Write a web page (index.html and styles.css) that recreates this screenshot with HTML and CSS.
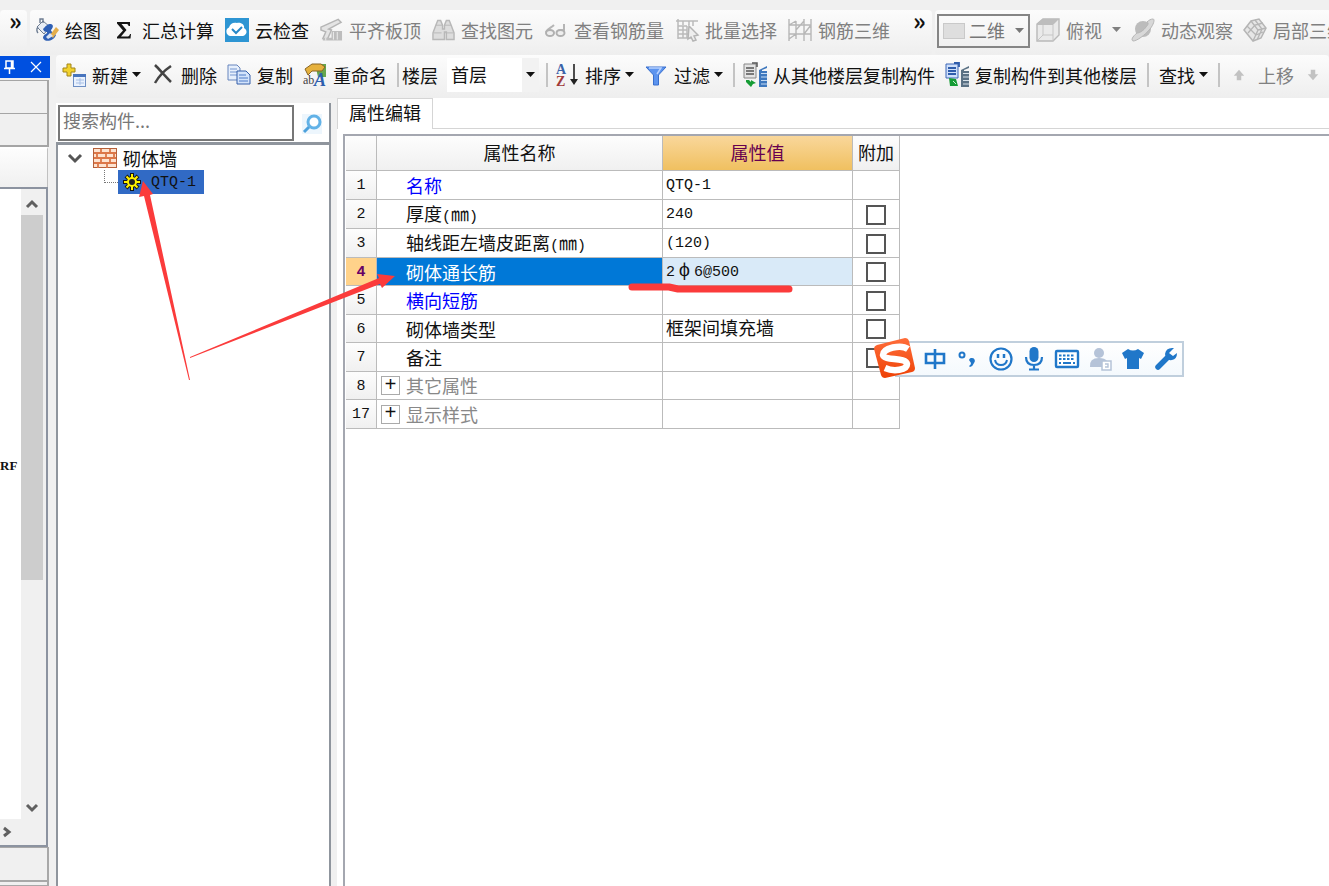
FILE: index.html
```html
<!DOCTYPE html>
<html lang="zh-CN">
<head>
<meta charset="utf-8">
<title>属性编辑</title>
<link rel="stylesheet" href="styles.css">
</head>
<body>
<header class="ribbon">
  <div class="bar bar-stub"><span class="more">»</span></div>
  <div class="bar bar-main">
    <button class="tool"><svg class="i24" viewBox="0 0 24 24"><path d="M2 9l6-6 7 6-6 7z" fill="#e9eef5" stroke="#6d7c91"/><path d="M3 9c-2 2-1 5 0 6M5 5V1h3v4" fill="none" stroke="#6d7c91" stroke-width="1.4"/><path d="M8 11c3-3 4-5 8-5 3 1 2 4 0 6 0 2 3 3 5 5-2 6-11 8-13 3 0-4 5-4 4-6-1 0-3 0-4-3z" fill="#2f60b5"/><path d="M15 17l6-8 3 3-6 8z" fill="#e3ad4b"/><path d="M11 19l4-4 3 3-5 3z" fill="#d7e2f4"/></svg>绘图</button>
    <button class="tool"><svg class="i24" viewBox="0 0 24 24"><path d="M5 4h13v4h-1.5c0-1.500-1-2-2.500-2H9.500l5 6-5.500 6.500h6c1.500 0 2.500-.5 3-2.500H19l-.5 4.500H5v-1.500l6-6.500-6-7z" fill="#151515"/></svg>汇总计算</button>
    <button class="tool"><svg class="i24" viewBox="0 0 24 24"><rect width="24" height="24" fill="#2d95d3"/><path d="M5 18a4.500 4.500 0 0 1-1-8.500C5 6 8 4 12 5c4-1 8 2 7 5 4 2 3 7-1 8z" fill="#fff"/><path d="M7 11l4 4 6-6" fill="none" stroke="#2788c8" stroke-width="2"/></svg>云检查</button>
    <button class="tool off"><svg class="i23" viewBox="0 0 24 24"><path d="M1 9L19 1l3 3-13 7 3 1-4 9H3l3-7-5-2z" fill="#e4e4e4" stroke="#b5b5b5" stroke-width="1.500"/><path d="M12 13h11v10H3v-3h9z" fill="#bdbdbd"/><path d="M14 14v8M18 14v8M6 20v3" stroke="#eee"/></svg>平齐板顶</button>
    <button class="tool off"><svg class="i23" viewBox="0 0 24 24"><path d="M4 7l2-5h3l2 5v4h2V7l2-5h3l2 5 3 8v7h-8v-8h-2v8H1v-7z" fill="#ddd" stroke="#b8b8b8" stroke-width="1.500"/><path d="M2 15h8M14 15h8M4 7h7M13 7h7" stroke="#b8b8b8"/></svg>查找图元</button>
    <button class="tool off"><svg class="i24" viewBox="0 0 24 24"><path d="M2 14c2-4 5-4 8-7M13 14c1-3 5-1 7-2V6" fill="none" stroke="#b5b5b5" stroke-width="2"/><ellipse cx="6" cy="15" rx="4" ry="3" fill="#eee" stroke="#b0b0b0" stroke-width="2"/><ellipse cx="16.500" cy="15" rx="4" ry="3" fill="#eee" stroke="#b0b0b0" stroke-width="2"/></svg>查看钢筋量</button>
    <button class="tool off"><svg class="i24" viewBox="0 0 24 24"><path d="M1 3h22M3 1v20M8 3v4M14 3v4M3 8h9M3 12h9M3 16h11M3 20h14M8 8v12M12 8v12M18 3v5" stroke="#bababa" stroke-width="1.500"/><path d="M14 8l9 9-4 1 2 4-3 1-2-4-3 2z" fill="#eee" stroke="#b5b5b5" stroke-width="1.500"/></svg>批量选择</button>
    <button class="tool off"><svg class="i24" viewBox="0 0 24 24"><path d="M1 1v22M8 3v18M16 1v22M23 1v22M1 7h22M1 16h22M1 7l7-4M1 21l7-5M8 12l8-9M16 16l7-9" fill="none" stroke="#b7b7b7" stroke-width="1.400"/></svg>钢筋三维</button>
    <span class="more more-end">»</span>
  </div>
  <div class="bar bar-view">
    <div class="view-mode">
      <svg class="view-icon" viewBox="0 0 22 16"><rect x=".5" y=".5" width="21" height="15" fill="#dedede" stroke="#c9c9c9"/></svg>
      <select class="view-select" aria-label="视图"><option>二维</option></select>
      <i class="caret"></i>
    </div>
    <button class="tool off"><svg class="i24" viewBox="0 0 24 24"><path d="M1 6l6-5h16v16l-6 6H1z" fill="#eaeaea" stroke="#b9b9b9" stroke-width="1.400"/><path d="M1 6l6-5h16l-6 6H1z" fill="#bdbdbd"/><path d="M17 7v16M7 7v10h10M7 17l-5 5" fill="none" stroke="#c6c6c6"/></svg>俯视<i class="caret gap-caret"></i></button>
    <button class="tool off"><svg class="i24" viewBox="0 0 24 24"><circle cx="12" cy="11" r="8" fill="#bcbcbc"/><path d="M6 15C1 19 0 22 2 23c4 0 12-6 17-12 4-5 5-10 3-10-2 0-4 1-6 3 2 1 1 3-1 5-2 3-6 6-9 6z" fill="#d8d8d8" stroke="#b5b5b5"/></svg>动态观察</button>
    <button class="tool off"><svg class="i24" viewBox="0 0 24 24"><path d="M1 12l7-9 8-2 7 9-5 10-8 3z" fill="#e6e6e6" stroke="#b5b5b5" stroke-width="1.500"/><path d="M8 3l7 9-5 11M15 12l8-2M4 8l9 9 7-3M12 2l7 9-5 11M5 15l7-8 8-2" fill="none" stroke="#b5b5b5" stroke-width="1.300"/></svg>局部三维</button>
  </div>
</header>

<div class="workspace">
  <aside class="dock">
    <div class="dock-title">
      <button class="dock-btn" aria-label="固定"><svg class="i16" viewBox="0 0 16 16"><path d="M5 2h7v7H5zM3 9.500h11M8.500 9v6M10.500 2v7" fill="none" stroke="#fff" stroke-width="1.500"/></svg></button>
      <button class="dock-btn" aria-label="关闭"><svg class="i16" viewBox="0 0 16 16"><path d="M3 3l10 10M13 3L3 13" stroke="#fff" stroke-width="1.200"/></svg></button>
    </div>
    <div class="dock-row"></div>
    <div class="dock-row dock-row-last"></div>
    <div class="dock-tools"></div>
    <div class="dock-list">
      <div class="dock-text">RF</div>
      <div class="scroll">
        <svg class="scroll-arrow" viewBox="0 0 22 26"><path d="M6 18l5-5 5 5" fill="none" stroke="#606060" stroke-width="3"/></svg>
        <div class="scroll-thumb"></div>
        <svg class="scroll-arrow scroll-down" viewBox="0 0 22 26"><path d="M6 12l5 5 5-5" fill="none" stroke="#606060" stroke-width="3"/></svg>
      </div>
      <div class="scroll-h"><svg class="i16" viewBox="0 0 16 16"><path d="M4 4l5 4-5 4" fill="none" stroke="#606060" stroke-width="3"/></svg></div>
    </div>
    <div class="dock-foot"></div>
    <div class="dock-foot dock-foot-end"></div>
  </aside>

  <main class="main">
    <div class="actions">
      <button class="tool"><svg class="i24" viewBox="0 0 24 24"><path d="M5 1h4v4h4v4H9v4H5V9H1V5h4z" fill="#f2d22e" stroke="#a38619"/><rect x="11.500" y="11.500" width="12" height="12" fill="#e9f1fd" stroke="#6e8fc4"/><path d="M11 11h13v3H11z" fill="#4774bd"/><path d="M14 17h8M14 20h8M18 15v7" stroke="#a7bfe5"/></svg>新建<i class="caret"></i></button>
      <button class="tool"><svg class="i24" viewBox="0 0 24 24"><path d="M4 2c4 4 11 12 16 17M20 3C14 7 8 13 4 20" fill="none" stroke="#444" stroke-width="2.500"/></svg>删除</button>
      <button class="tool"><svg class="i24" viewBox="0 0 24 24"><path d="M1 2h9l3 3v12H1z" fill="#e6effc" stroke="#6785bd"/><path d="M3 6h7M3 9h7M3 12h7" stroke="#7596d0"/><path d="M10 8h9l4 4v9H10z" fill="#d3e3fb" stroke="#355fa9"/><path d="M12 12h7M12 15h9M12 18h9" stroke="#4c7ac6"/></svg>复制</button>
      <button class="tool"><svg class="i24" viewBox="0 0 24 24"><path d="M12 1h11v13h-8z" fill="#67a64e"/><path d="M2 6l7-5h9l4 3-3 4H9l-4 4z" fill="#e6b13d" stroke="#896523"/><text class="icon-ab" x="0" y="21">ab</text><text class="icon-a" x="11" y="23">A</text></svg>重命名</button>
      <span class="sep"></span>
      <label class="floor-label" for="floor">楼层</label>
      <div class="floor"><select id="floor" class="floor-select"><option>首层</option></select><i class="caret"></i></div>
      <span class="sep sep-floor"></span>
      <button class="tool"><svg class="i24" viewBox="0 0 24 24"><text class="icon-sort icon-sort-a" x="1" y="11">A</text><text class="icon-sort icon-sort-z" x="1" y="23">Z</text><path d="M19 1v18" stroke="#222" stroke-width="1.600"/><path d="M15 16h8l-4 6z" fill="#222"/></svg>排序<i class="caret"></i></button>
      <button class="tool"><svg class="i24" viewBox="0 0 24 24"><path d="M2 4h20l-7.500 8v10h-5V12z" fill="#5c94ef" stroke="#386fce"/><path d="M5 5h12l-4 6" fill="none" stroke="#b6d1ff" stroke-width="1.500"/></svg>过滤<i class="caret"></i></button>
      <span class="sep"></span>
      <button class="tool"><svg class="i24" viewBox="0 0 24 24"><path d="M1 1h12v14H1z" fill="#e4e4e4" stroke="#888"/><path d="M9 0h5v4M3 5h8M3 8h8M3 11h8" fill="none" stroke="#555" stroke-width="1.500"/><path d="M3 17h3l2 2v-2l5 3-3 1-2 3-5-5z" fill="#169c35"/><path d="M16 7l8-4v2l-5 2v1h5v16h-8z" fill="#3e78be"/><path d="M18 10.500h6M18 14h6M18 17.500h6M18 21h6" stroke="#c7dcf4"/></svg>从其他楼层复制构件</button>
      <button class="tool"><svg class="i24" viewBox="0 0 24 24"><path d="M1 1h12v14H1z" fill="#cfe0fa" stroke="#3c66b7"/><path d="M9 0h5v4M3 5h8M3 8h8M3 11h8" fill="none" stroke="#2f5dac" stroke-width="1.800"/><path d="M4 15l7 1 2 7H5z" fill="#169c35"/><path d="M8 18l3 3" stroke="#c9f0d0"/><path d="M16 7l8-4v2l-5 2v1h5v16h-8z" fill="#5a7184"/><path d="M18 10.500h6M18 14h6M18 17.500h6M18 21h6" stroke="#d8e2e9"/></svg>复制构件到其他楼层</button>
      <span class="sep sep-wide"></span>
      <button class="tool">查找<i class="caret"></i></button>
      <span class="sep sep-wide"></span>
      <button class="tool off move"><svg class="i18" viewBox="0 0 18 24"><path d="M9 5l7 8h-4v6H6v-6H2z" fill="#c2c2c2"/></svg>上移</button>
      <button class="tool off" aria-label="下移"><svg class="i18" viewBox="0 0 18 24"><path d="M9 19l7-8h-4V5H6v6H2z" fill="#c2c2c2"/></svg></button>
    </div>

    <div class="panes">
      <section class="tree-pane">
        <div class="search">
          <input class="search-input" type="text" placeholder="搜索构件..." aria-label="搜索构件">
          <button class="search-btn" aria-label="搜索"><svg class="i20" viewBox="0 0 20 20"><rect width="20" height="20" fill="#edf6fd"/><circle cx="12" cy="8" r="6" fill="#fff" stroke="#62b2e7" stroke-width="3"/><path d="M7 13l-5 5" stroke="#4da1dc" stroke-width="3"/></svg></button>
        </div>
        <div class="tree">
          <div class="tree-root">
            <svg class="i18 chev" viewBox="0 0 18 18"><path d="M3 6l6 6 6-6" fill="none" stroke="#555" stroke-width="3"/></svg>
            <svg class="brick" viewBox="0 0 24 20"><rect x=".5" y=".5" width="23" height="19" fill="#fde3d0" stroke="#b5603a"/><path d="M1 5h22M1 10h22M1 15h22M8 1v4M17 1v4M4 5v5M13 5v5M21 5v5M8 10v5M17 10v5M5 15v5M14 15v5" stroke="#dc7748" stroke-width="1.800"/></svg>
            <span>砌体墙</span>
          </div>
          <div class="tree-leaf">
            <span class="elbow"></span>
            <span class="leaf"><svg class="i18" viewBox="0 0 18 18"><path d="M9 0v18M0 9h18M3 3l12 12M15 3L3 15" stroke="#151515" stroke-width="4"/><path d="M9 1v16M1 9h16M3.500 3.500l11 11M14.500 3.500l-11 11" stroke="#fff200" stroke-width="2"/><circle cx="9" cy="9" r="4" fill="#222" stroke="#fff200" stroke-width="2"/></svg>QTQ-1</span>
          </div>
        </div>
      </section>

      <section class="editor">
        <div class="tabs"><button class="tab">属性编辑</button><div class="tab-rest"></div></div>
        <div class="grid-frame">
          <table class="grid">
            <thead><tr><th class="c-no"></th><th class="c-name">属性名称</th><th class="c-val picked">属性值</th><th class="c-add">附加</th></tr></thead>
            <tbody>
              <tr><th>1</th><td class="name link">名称</td><td>QTQ-1</td><td></td></tr>
              <tr><th>2</th><td class="name">厚度<span class="half">(</span>㎜<span class="half">)</span></td><td>240</td><td class="mark"><input type="checkbox" aria-label="厚度 附加"></td></tr>
              <tr><th>3</th><td class="name">轴线距左墙皮距离<span class="half">(</span>㎜<span class="half">)</span></td><td>(120)</td><td class="mark"><input type="checkbox" aria-label="轴线距左墙皮距离 附加"></td></tr>
              <tr class="current"><th>4</th><td class="name">砌体通长筋</td><td class="value">2<span class="rebar">ф</span>6@500</td><td class="mark"><input type="checkbox" aria-label="砌体通长筋 附加"></td></tr>
              <tr><th>5</th><td class="name link">横向短筋</td><td></td><td class="mark"><input type="checkbox" aria-label="横向短筋 附加"></td></tr>
              <tr><th>6</th><td class="name">砌体墙类型</td><td>框架间填充墙</td><td class="mark"><input type="checkbox" aria-label="砌体墙类型 附加"></td></tr>
              <tr><th>7</th><td class="name">备注</td><td></td><td class="mark"><input type="checkbox" aria-label="备注 附加"></td></tr>
              <tr><th>8</th><td class="group"><div class="group-in"><button class="plus">+</button><span>其它属性</span></div></td><td></td><td></td></tr>
              <tr><th>17</th><td class="group"><div class="group-in"><button class="plus">+</button><span>显示样式</span></div></td><td></td><td></td></tr>
            </tbody>
          </table>
        </div>
      </section>
    </div>
  </main>
</div>

<svg class="ink" viewBox="0 0 700 300" aria-hidden="true">
  <path d="M143 35l10 13-3 1 40 185h-1L144 50l-5 1z" fill="#fb3b3b"/>
  <path d="M190 212v-1L379 132l-2-4 18 2-13 12-2-4z" fill="#fb3b3b"/>
</svg>
<svg class="ink-line" viewBox="0 0 170 14" aria-hidden="true"><path d="M5 5h37l9 2h111" fill="none" stroke="#fb3b3b" stroke-width="7" stroke-linecap="round" stroke-linejoin="round"/></svg>

<div class="ime">
  <svg class="ime-logo" viewBox="0 0 44 44"><defs><linearGradient id="lg" x1="0" y1="0" x2="0" y2="1"><stop offset="0" stop-color="#ff6d3a"/><stop offset="1" stop-color="#ee4206"/></linearGradient></defs><path d="M4 9L32 2q3 0 4 3l6 27q0 3-3 4l-27 6q-3 0-4-3L1 13q0-3 3-4z" fill="url(#lg)"/><path d="M35 13C28 8 10 12 10 19c1 6 23 2 24 9 0 6-13 8-22 4" fill="none" stroke="#fff" stroke-width="6.500"/></svg>
  <svg class="i24" viewBox="0 0 24 24"><path d="M3 7h18v9H3zM12 2v20" fill="none" stroke="#2077c9" stroke-width="2.600"/></svg>
  <svg class="i24" viewBox="0 0 24 24"><circle cx="6" cy="8" r="2.500" fill="none" stroke="#2077c9" stroke-width="2"/><path d="M13 13a3 3 0 1 1 5 3q-1 3-4 4l-1-1q2-1 2-3z" fill="#2077c9"/></svg>
  <svg class="i24" viewBox="0 0 24 24"><circle cx="12" cy="12" r="10.500" fill="none" stroke="#2077c9" stroke-width="2.200"/><path d="M9 7v4M15 7v4" stroke="#2077c9" stroke-width="2.500"/><path d="M6 13q1 5 6 5t6-5" fill="none" stroke="#2077c9" stroke-width="2"/></svg>
  <svg class="i24" viewBox="0 0 24 24"><rect x="7.500" y="0" width="9" height="15" rx="4.500" fill="#2077c9"/><path d="M4 10q0 8 8 8t8-8M12 18v4M7 22.500h10" fill="none" stroke="#2077c9" stroke-width="2.200"/></svg>
  <svg class="i24" viewBox="0 0 24 24"><rect x="1" y="4" width="22" height="16" rx="1" fill="#fff" stroke="#2077c9" stroke-width="2.400"/><path d="M4 8.500h16M4 12h16" stroke="#2077c9" stroke-width="2" stroke-dasharray="2.500 1.500"/><path d="M4 16h2M8 16h8M18 16h2" stroke="#2077c9" stroke-width="2"/></svg>
  <svg class="i24" viewBox="0 0 24 24"><circle cx="11" cy="6" r="5" fill="#b5c3d8"/><path d="M2 20q-1-9 9-9 6 0 8 3v6z" fill="#b5c3d8"/><rect x="14" y="14" width="9" height="9" fill="#fff" stroke="#b5c3d8" stroke-width="1.500"/><path d="M17 17h3v3h-3" fill="none" stroke="#b5c3d8" stroke-width="1.400"/></svg>
  <svg class="i24" viewBox="0 0 24 24"><path d="M7 2q5 3 10 0l6 4-3 6-2-1v11H6V11l-2 1-3-6z" fill="#2077c9"/></svg>
  <svg class="i24" viewBox="0 0 24 24"><path d="M4 20L14 10" stroke="#2077c9" stroke-width="5.500" stroke-linecap="round"/><path d="M20 1q-8-1-9 6 1 7 7 6 5-1 5-7l-4 3-4-3z" fill="#2077c9"/></svg>
</div>
</body>
</html>
```
FILE: styles.css
```css
* { box-sizing: border-box; }

body {
  margin: 0;
  height: 100vh;
  display: flex;
  flex-direction: column;
  overflow: hidden;
  background: #f0f0f0;
  color: #111;
  font: 18px/24px "Noto Sans CJK SC", sans-serif;
}

button, select, input { font: inherit; color: inherit; margin: 0; }
button { background: none; border: 0; padding: 0; }
svg { display: block; flex: none; overflow: visible; }

.i16 { width: 16px; height: 16px; }
.i18 { width: 18px; height: 18px; }
.i20 { width: 20px; height: 20px; }
.i23 { width: 23px; height: 24px; }
.i24 { width: 24px; height: 24px; }

.caret {
  flex: none;
  width: 9px;
  height: 5px;
  background: currentColor;
  clip-path: polygon(0 0, 100% 0, 50% 100%);
}

/* upper toolbar */
.ribbon {
  display: flex;
  flex: none;
  gap: 3px;
  padding-top: 10px;
  height: 55px;
}
.bar {
  display: flex;
  flex: none;
  align-items: center;
  background: linear-gradient(#fcfcfc, #eeeeee);
  border-radius: 4px;
  padding-bottom: 6px;
}
.bar-stub { width: 27px; padding-left: 9px; }
.bar-main { width: 902px; gap: 11px; padding-left: 5px; }
.bar-view { flex: 1 0 auto; gap: 10px; padding-left: 2px; }
.more { font-size: 24px; font-weight: 700; line-height: 20px; align-self: flex-start; }
.more-end { margin-left: 12px; }

.tool {
  display: flex;
  flex: none;
  align-items: center;
  gap: 6px;
  white-space: nowrap;
}
.tool .caret { margin-left: -2px; }
.tool .gap-caret { margin-left: 4px; }
.off { color: #808080; }

.view-mode {
  position: relative;
  display: flex;
  align-items: center;
  width: 93px;
  height: 34px;
  margin-top: 2px;
  margin-right: -4px;
  padding-left: 4px;
  border: 2px solid #858585;
  color: #777;
}
.view-icon { width: 22px; height: 16px; }
.view-select {
  width: 62px;
  padding: 0 0 2px 4px;
  border: 0;
  background: none;
  appearance: none;
}
.view-mode .caret, .floor .caret { position: absolute; right: 4px; pointer-events: none; }

.workspace { display: flex; flex: 1; min-height: 0; }

/* left dock */
.dock { display: flex; flex-direction: column; flex: none; width: 50px; padding-top: 1px; }
.dock-title {
  display: flex;
  align-items: center;
  gap: 11px;
  height: 22px;
  margin-bottom: 2px;
  padding-left: 1px;
  background: #0050e0;
}
.dock-row {
  height: 33px;
  margin-right: 1px;
  border-top: 1px solid #a5a5a5;
  border-right: 2px solid #a5a5a5;
}
.dock-row-last { height: 34px; border-bottom: 2px solid #a5a5a5; }
.dock-tools {
  height: 40px;
  margin-right: 2px;
  border-right: 1px solid #c0c0c0;
  border-top: 2px solid #fff;
  background: linear-gradient(#fdfdfd, #f0f0f0);
}
.dock-list {
  flex: 1;
  min-height: 0;
  display: grid;
  grid-template-columns: 21px 1fr;
  grid-template-rows: 1fr 26px;
  margin-right: 2px;
  padding-right: 3px;
  border: solid #8c93a0;
  border-width: 2px 2px 2px 0;
  background: #f0f0f0;
}
.dock-text {
  padding-top: 265px;
  background: #fff;
  font: 700 13px/24px "Liberation Serif", serif;
}
.scroll { display: flex; flex-direction: column; }
.scroll-arrow { width: 22px; height: 26px; }
.scroll-thumb { height: 58%; background: #cdcdcd; }
.scroll-down { margin-top: auto; }
.scroll-h { display: flex; align-items: center; }
.dock-foot {
  flex: none;
  height: 34px;
  margin-right: 1px;
  border: solid #a8a8a8;
  border-width: 1px 2px 1px 0;
}
.dock-foot-end { height: 5px; }

/* second toolbar */
.main { display: flex; flex-direction: column; flex: 1; min-width: 0; padding-left: 6px; }
.actions {
  display: flex;
  flex: none;
  align-items: center;
  gap: 10px;
  height: 43px;
  padding: 0 0 4px 6px;
  border-radius: 4px;
  background: linear-gradient(#fcfcfc, #eeeeee);
}
.sep { flex: none; width: 2px; height: 24px; background: #c4c4c4; margin-right: -2px; }
.sep-wide { margin-right: 0; }
.floor-label { flex: none; margin-left: -5px; }
.floor {
  position: relative;
  display: flex;
  align-items: center;
  flex: none;
  width: 92px;
  height: 34px;
  margin-left: -1px;
  background: linear-gradient(to right, #fff 75px, #f2f2f2 75px);
}
.floor-select { width: 92px; padding: 0 0 2px 4px; border: 0; background: none; appearance: none; }
.sep-floor { margin-left: -3px; margin-right: -3px; }
.move { gap: 10px; }

.icon-ab { font: 12px "Liberation Serif", serif; fill: #444; }
.icon-a { font: italic 700 18px "Liberation Serif", serif; fill: #2e5fae; }
.icon-sort { font: 700 14px "Liberation Serif", serif; }
.icon-sort-a { fill: #3b62a8; }
.icon-sort-z { fill: #a03a3a; }

.panes { display: flex; flex: 1; min-height: 0; gap: 6px; }

/* component tree */
.tree-pane {
  display: flex;
  flex-direction: column;
  flex: none;
  width: 275px;
  margin-top: 5px;
  border-right: 2px solid #8f959d;
  background: #fff;
}
.search { display: flex; height: 39px; padding: 2px 0 0 2px; }
.search-input {
  width: 236px;
  height: 36px;
  padding: 0 0 6px 3px;
  border: 2px solid #777;
  background: #fff;
}
.search-input::placeholder { color: #777; opacity: 1; }
.search-btn { display: flex; flex: 1; align-items: center; justify-content: center; }
.tree {
  flex: 1;
  border: solid #8f959d;
  border-width: 3px 0 0 2px;
}
.tree-root { display: flex; align-items: center; height: 25px; padding-left: 8px; }
.brick { width: 24px; height: 20px; margin: 0 6px 0 9px; }
.tree-leaf { display: flex; height: 24px; padding-left: 46px; }
.elbow { width: 14px; height: 13px; border: dotted #777; border-width: 0 0 1px 1px; }
.leaf {
  display: flex;
  align-items: center;
  gap: 10px;
  width: 86px;
  padding-left: 5px;
  background: #316ac5;
  font: 15px "Liberation Mono", monospace;
}

/* property editor */
.editor {
  display: flex;
  flex-direction: column;
  flex: 1;
  min-width: 0;
  background: #fff;
}
.tabs { display: flex; height: 31px; }
.tab {
  width: 96px;
  padding-bottom: 4px;
  border: solid #d5d5d5;
  border-width: 1px 1px 0 1px;
}
.tab-rest { flex: 1; border-bottom: 1px solid #d5d5d5; }
.grid-frame {
  flex: 1;
  margin: 5px 0 0 6px;
  padding-left: 1px;
  border: solid #a4a7b0;
  border-width: 2px 0 0 2px;
}
.grid {
  width: 554px;
  border-spacing: 0;
  table-layout: fixed;
  font-family: "Liberation Mono", "Noto Sans CJK SC", monospace;
}
.c-no { width: 31px; }
.c-name { width: 286px; }
.c-val { width: 190px; }
.c-add { width: 47px; }
.grid th, .grid td {
  padding: 2px 0 0 3px;
  border: solid #bbb;
  border-width: 0 1px 1px 0;
  text-align: left;
  white-space: nowrap;
}
.grid th {
  padding: 2px 0 0;
  font-weight: 400;
  text-align: center;
  background: linear-gradient(#fdfdfd, #f0f0f0);
}
.grid thead th { height: 35px; padding-top: 3px; }
.grid thead .picked { color: #660050; background: linear-gradient(#f9d79b, #f0c060); }
.grid tbody tr { height: 28px; line-height: 20px; }
.grid tbody tr:nth-child(odd) { height: 29px; }
.grid tbody th, .grid td:nth-child(3), .half { font-size: 15px; }
.grid tbody tr:nth-child(6) td:nth-child(3) { font-size: 18px; }
.grid .name { padding: 6px 0 0 29px; }
.grid .link { color: #0000ff; }
.grid .group { padding: 0 0 0 4px; color: #888; }
.grid .mark { padding: 1px 0 0; }
.mark input {
  display: block;
  width: 20px;
  height: 20px;
  margin: 0 auto;
  border: 2px solid #555;
  background: #fff;
  appearance: none;
}
.grid .current th { color: #660066; font-weight: 700; background: #ffd28a; }
.grid .current .name { color: #fff; background: #0078d7; }
.grid .current .value { background: #d9eaf8; }
.rebar { display: inline-block; width: 19px; text-align: center; font-size: 18px; line-height: 18px; }
.group-in { display: flex; align-items: center; gap: 6px; }
.group-in span { padding-top: 5px; }
.plus {
  width: 19px;
  height: 19px;
  border: 1px solid #aaa;
  color: #111;
  font: 20px/16px "Liberation Mono", monospace;
}

/* pen marks over the window */
.ink { position: absolute; left: 0; top: 146px; width: 700px; height: 300px; pointer-events: none; }
.ink-line { position: absolute; left: 627px; top: 282px; width: 170px; height: 14px; pointer-events: none; }

/* floating input-method bar */
.ime {
  position: absolute;
  left: 895px;
  top: 341px;
  display: flex;
  align-items: center;
  gap: 9px;
  width: 289px;
  height: 36px;
  padding-left: 26px;
  border: 2px solid #c0cfdd;
  background: linear-gradient(#fff, #f4f9fd);
}
.ime-logo { position: absolute; left: -24px; top: -7px; width: 44px; height: 44px; }
```
